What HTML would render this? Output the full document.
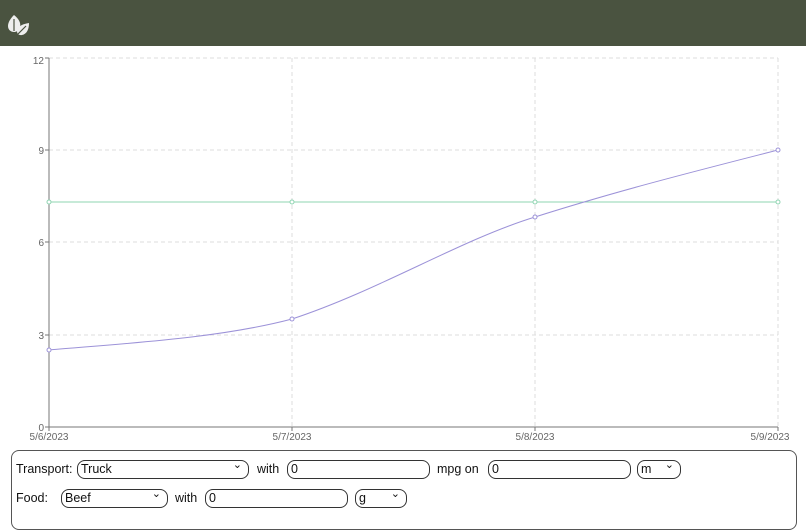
<!DOCTYPE html>
<html><head><meta charset="utf-8"><style>
*{box-sizing:border-box}
body{margin:0;width:806px;height:500px;overflow:hidden;background:#fff;font-family:"Liberation Sans",sans-serif;}
.hdr{position:absolute;left:0;top:0;width:806px;height:46px;background:#4a5340;}
.panel{position:absolute;left:11px;top:450px;width:786px;height:80px;border:1px solid #555;border-radius:8px;}
.f{position:absolute;font-size:12.5px;color:#111;}
.box{position:absolute;height:19px;border:1px solid #333;border-radius:8px;font-size:12.5px;padding:1px 3px;color:#111;}
.sel::after{content:"⌄";position:absolute;right:6px;top:-3px;font-size:11px;}
</style></head><body>
<div class="hdr">
<svg width="32" height="32" viewBox="0 0 32 32" style="position:absolute;left:0;top:8px">
<path d="M14 7 C19 11 21 15 20 19 C19 23 16 24 14 24 C11 24 8 22 8 18 C8 14 11 10 14 7 Z" fill="#eee"/>
<path d="M14 11 L14 23" stroke="#4a5340" stroke-width="1.2"/>
<path d="M29 15 C29 21 27 26 22 27 C19 27.5 17 26 17 23 C17 19 22 16 29 15 Z" fill="#eee"/>
<path d="M18 26 L26 18" stroke="#4a5340" stroke-width="1.2"/>
</svg>
</div>
<svg width="806" height="450" style="position:absolute;left:0;top:0" font-family="Liberation Sans" font-size="10" fill="#666">
<g stroke="#ddd" stroke-dasharray="4 3" fill="none">
<line x1="49" y1="58" x2="778" y2="58"/><line x1="49" y1="150" x2="778" y2="150"/>
<line x1="49" y1="242" x2="778" y2="242"/><line x1="49" y1="335" x2="778" y2="335"/>
<line x1="292" y1="58" x2="292" y2="427"/><line x1="535" y1="58" x2="535" y2="427"/><line x1="778" y1="58" x2="778" y2="427"/>
</g>
<g stroke="#777" fill="none">
<line x1="49" y1="58" x2="49" y2="427"/><line x1="49" y1="427" x2="778" y2="427"/>
<line x1="45" y1="58" x2="49" y2="58"/><line x1="45" y1="150" x2="49" y2="150"/><line x1="45" y1="242" x2="49" y2="242"/><line x1="45" y1="335" x2="49" y2="335"/><line x1="45" y1="427" x2="49" y2="427"/>
<line x1="49" y1="427" x2="49" y2="431"/><line x1="292" y1="427" x2="292" y2="431"/><line x1="535" y1="427" x2="535" y2="431"/><line x1="778" y1="427" x2="778" y2="431"/>
</g>
<g text-anchor="end"><text x="44" y="64">12</text><text x="44" y="154">9</text><text x="44" y="246">6</text><text x="44" y="339">3</text><text x="44" y="431">0</text></g>
<g text-anchor="middle"><text x="49" y="440">5/6/2023</text><text x="292" y="440">5/7/2023</text><text x="535" y="440">5/8/2023</text><text x="770" y="440">5/9/2023</text></g>
<line x1="49" y1="202" x2="778" y2="202" stroke="#8fd4b2"/>
<g fill="#fff" stroke="#8fd4b2"><circle cx="49" cy="202" r="2"/><circle cx="292" cy="202" r="2"/><circle cx="535" cy="202" r="2"/><circle cx="778" cy="202" r="2"/></g>
<path d="M49 350 C130 343 220 338 292 319 C380 290 460 240 535 217 C620 190 700 170 778 150" stroke="#9c92d8" fill="none"/>
<g fill="#fff" stroke="#9c92d8"><circle cx="49" cy="350" r="2"/><circle cx="292" cy="319" r="2"/><circle cx="535" cy="217" r="2"/><circle cx="778" cy="150" r="2"/></g>
</svg>
<div class="panel"></div>
<div class="f" style="left:16px;top:462px">Transport:</div>
<div class="box sel" style="left:77px;top:460px;width:172px">Truck</div>
<div class="f" style="left:257px;top:462px">with</div>
<div class="box" style="left:287px;top:460px;width:143px">0</div>
<div class="f" style="left:437px;top:462px">mpg on</div>
<div class="box" style="left:488px;top:460px;width:143px">0</div>
<div class="box sel" style="left:637px;top:460px;width:44px">m</div>
<div class="f" style="left:16px;top:491px">Food:</div>
<div class="box sel" style="left:61px;top:489px;width:107px">Beef</div>
<div class="f" style="left:175px;top:491px">with</div>
<div class="box" style="left:205px;top:489px;width:143px">0</div>
<div class="box sel" style="left:355px;top:489px;width:52px">g</div>
</body></html>
